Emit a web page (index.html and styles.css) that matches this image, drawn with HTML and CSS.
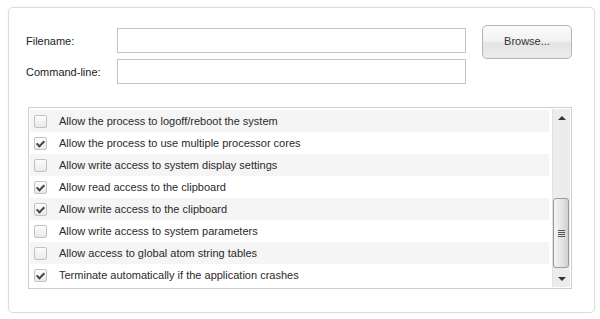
FILE: index.html
```html
<!DOCTYPE html>
<html lang="en">
<head>
  <meta charset="UTF-8" />
  <title>Process Options</title>
  <link rel="stylesheet" href="styles.css">
</head>
<body>
  <div class="panel">
    <div class="top">
      <div class="fields">
        <div class="field">
          <label>Filename:</label>
          <input type="text" class="box" />
        </div>
        <div class="field">
          <label>Command-line:</label>
          <input type="text" class="box" />
        </div>
      </div>
      <button class="browse">Browse...</button>
    </div>

    <div class="list">
      <ul class="items">
        <li><span class="check"></span>Allow the process to logoff/reboot the system</li>
        <li><span class="check on"></span>Allow the process to use multiple processor cores</li>
        <li><span class="check"></span>Allow write access to system display settings</li>
        <li><span class="check on"></span>Allow read access to the clipboard</li>
        <li><span class="check on"></span>Allow write access to the clipboard</li>
        <li><span class="check"></span>Allow write access to system parameters</li>
        <li><span class="check"></span>Allow access to global atom string tables</li>
        <li><span class="check on"></span>Terminate automatically if the application crashes</li>
      </ul>
      <div class="scrollbar">
        <div class="arrow up"></div>
        <div class="track">
          <div class="thumb"><span></span></div>
        </div>
        <div class="arrow down"></div>
      </div>
    </div>
  </div>
</body>
</html>
```

FILE: styles.css
```css
body {
  margin: 0;
  padding: 7px 5px 6px 8px;
  background: #ffffff;
  font-family: Arial, "Liberation Sans", sans-serif;
  font-size: 11px;
  color: #222;
}

.panel {
  height: 306px;
  box-sizing: border-box;
  border: 1px solid #dcdcdc;
  border-radius: 5px;
  box-shadow: 0 0 2px rgba(0,0,0,0.08);
  padding: 17px 22px 0 19px;
}

.top {
  display: flex;
  align-items: flex-start;
}

.fields {
  display: flex;
  flex-direction: column;
  gap: 6px;
  padding-top: 3px;
}

.field {
  display: flex;
  align-items: center;
}

.field label {
  width: 91px;
  margin-left: -2px;
}

.box {
  width: 349px;
  height: 25px;
  box-sizing: border-box;
  border: 1px solid #c3c3c3;
  margin: 0;
  padding: 0 4px;
}

.browse {
  margin-left: 16px;
  width: 90px;
  height: 34px;
  border: 1px solid #b5b5b5;
  border-radius: 5px;
  background: linear-gradient(#fbfbfb, #f1f1f1 50%, #e4e4e4 52%, #ececec);
  font-family: Arial, "Liberation Sans", sans-serif;
  font-size: 11px;
  color: #333;
  padding: 0 0 3px;
}

.list {
  margin-top: 23px;
  width: 544px;
  height: 182px;
  box-sizing: border-box;
  border: 1px solid #cfcfcf;
  display: flex;
  padding: 2px 1px 0 1px;
}

.items {
  list-style: none;
  margin: 0;
  padding: 0;
  flex: 1;
  margin-right: 3px;
}

.items li {
  height: 22px;
  display: flex;
  align-items: center;
  padding-left: 4px;
  color: #2a2a2a;
}

.items li:nth-child(odd) {
  background: #f5f5f5;
}

.check {
  width: 11px;
  height: 11px;
  border: 1px solid #c2c2c2;
  border-radius: 2px;
  background: linear-gradient(#fdfdfd, #e9e9e9);
  margin-right: 12px;
  position: relative;
}

.check.on::after {
  content: "";
  position: absolute;
  left: 3px;
  top: 1px;
  width: 3px;
  height: 6px;
  border: solid #444;
  border-width: 0 2px 2px 0;
  transform: rotate(45deg);
}

.scrollbar {
  width: 17px;
  margin-top: -1px;
  margin-bottom: 1px;
  background: #ececec;
  border-left: 1px solid #e2e2e2;
  display: flex;
  flex-direction: column;
}

.arrow {
  height: 17px;
  position: relative;
}

.arrow::after {
  content: "";
  position: absolute;
  left: 5px;
  width: 0;
  height: 0;
  border-left: 4px solid transparent;
  border-right: 4px solid transparent;
}

.arrow.up::after {
  top: 7px;
  border-bottom: 4px solid #333;
}

.arrow.down::after {
  top: 7px;
  border-top: 4px solid #333;
}

.track {
  flex: 1;
  display: flex;
  flex-direction: column;
  justify-content: flex-end;
  padding-bottom: 2px;
}

.thumb {
  height: 68px;
  margin: 0 1px 0 0;
  border: 1px solid #9a9a9a;
  border-radius: 3px;
  background: linear-gradient(to right, #f5f5f5, #e2e2e2 60%, #cfcfcf);
  display: flex;
  align-items: center;
  justify-content: center;
}

.thumb span {
  width: 7px;
  height: 7px;
  background: repeating-linear-gradient(#555 0 1px, transparent 1px 2px);
}
```
